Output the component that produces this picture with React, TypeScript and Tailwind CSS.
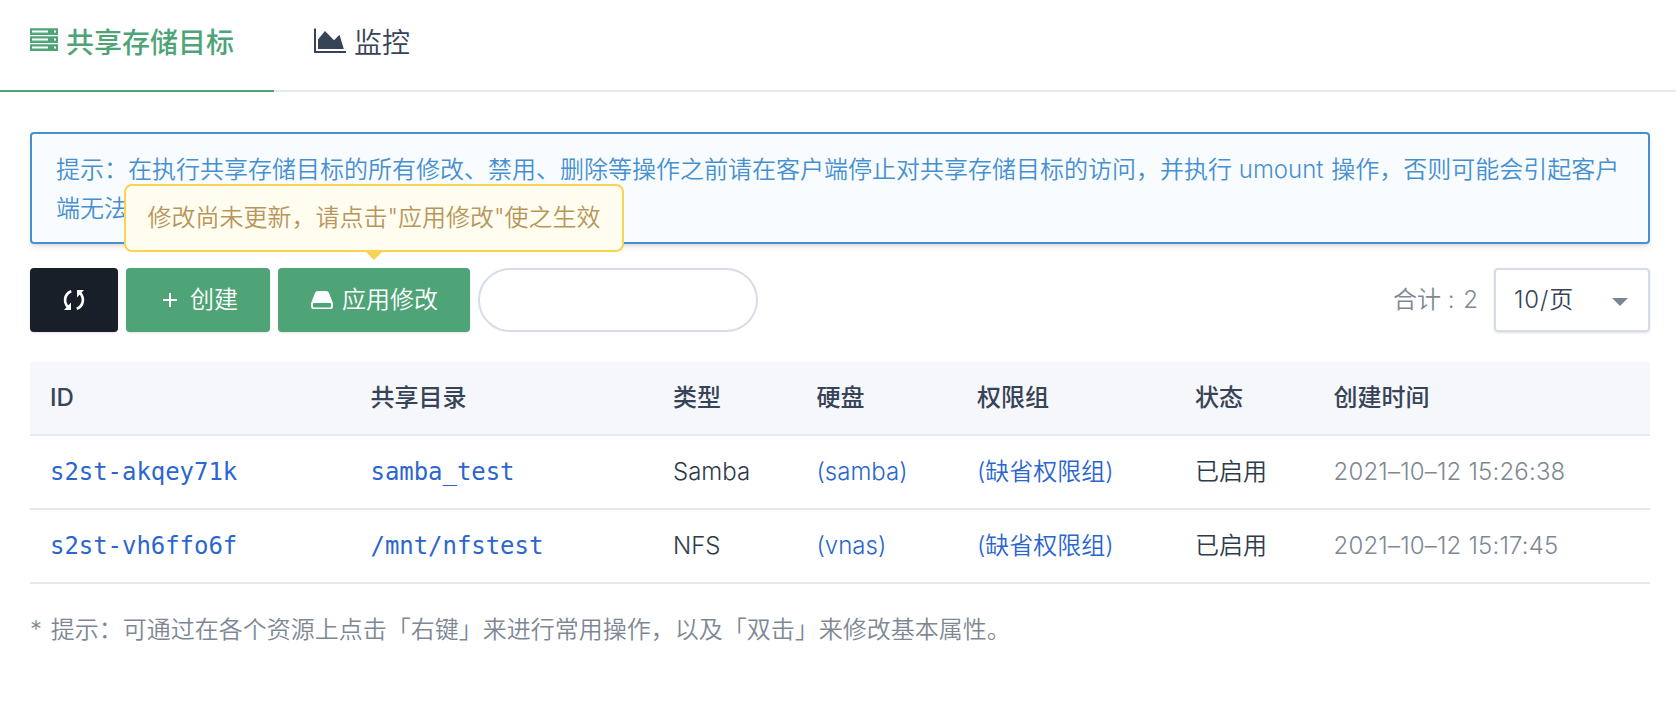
import React from "react";

const sans = "font-['Inter','Noto_Sans_CJK_SC',sans-serif]";

function ServerIcon() {
  return (
    <svg width="28" height="24" viewBox="0 0 28 24" fill="currentColor">
      {[0, 8, 16].map((y) => (
        <path
          key={y}
          fillRule="evenodd"
          d={`M0 ${y + 0.3}h28v6.600H0zM2 ${y + 2.6}v2h16v-2zM24 ${y + 2.6}v2h2v-2z`}
        />
      ))}
    </svg>
  );
}

function ChartIcon() {
  return (
    <svg width="33" height="26" viewBox="0 0 33 26" fill="currentColor">
      <path d="M0 0.500h2v22.500h30v2H0z" />
      <path d="M4 21V11.500l7-8.500 9 9.300 5.500-5.500 4.300 14.200z" />
    </svg>
  );
}

function SyncIcon() {
  return (
    <svg width="22" height="22" viewBox="0 0 22 22" fill="none" stroke="currentColor" strokeWidth="2.6">
      <path d="M8.300 2.200C1 5 0.500 13.500 5 18" />
      <path d="M13.700 19.800C21 17 21.500 8.500 17 4" />
      <path d="M8 13.500V21H1z" fill="currentColor" stroke="none" />
      <path d="M14 8.500V1h7z" fill="currentColor" stroke="none" />
    </svg>
  );
}

function DriveIcon() {
  return (
    <svg width="22" height="24" viewBox="0 0 22 24" fill="currentColor">
      <path
        fillRule="evenodd"
        d="M7 3h8q2.300 0 3 2l3.500 9q0.500 1.200 0.500 2.500v2q0 2.500-2.500 2.500h-17Q0 21 0 18.500v-2Q0 15.200 0.500 14L4 5q0.700-2 3-2zM3 15q-1 0-1 1v2.500q0 1 1 1h16q1 0 1-1V16q0-1-1-1z"
      />
    </svg>
  );
}

const rows = [
  ["s2st-akqey71k", "samba_test", "Samba", "(samba)", "(缺省权限组)", "已启用", "2021–10–12 15:26:38"],
  ["s2st-vh6ffo6f", "/mnt/nfstest", "NFS", "(vnas)", "(缺省权限组)", "已启用", "2021–10–12 15:17:45"],
];
const heads = ["ID", "共享目录", "类型", "硬盘", "权限组", "状态", "创建时间"];
const columns = "grid grid-cols-[320.5px_302.5px_143.5px_160.5px_218px_138.5px_1fr] items-center pl-5";
const cellStyles = [
  "font-['DejaVu_Sans_Mono',monospace] tracking-[-0.05px] text-[#2b66cf]",
  "font-['DejaVu_Sans_Mono',monospace] tracking-[-0.05px] text-[#2b66cf]",
  "text-[#2f3b4a]",
  "text-[#2b66cf]",
  "text-[#2b66cf]",
  "text-[#2f3b4a]",
  "tracking-[0.18px] text-[#7e8894]",
];

export default function App() {
  return (
    <div className={`${sans} h-[704px] w-[1676px] overflow-hidden bg-white text-2xl font-[350]`}>
      <nav className="flex h-[92px] text-[28px]">
        <div className="flex h-full w-[274px] items-start gap-2 border-b-2 border-[#4ea477] pl-[30px] pt-[22px] font-medium leading-[42px] text-[#4ea477]">
          <span className="mt-[6px]"><ServerIcon /></span>
          <span>共享存储目标</span>
        </div>
        <div className="flex h-full flex-1 items-start gap-[7px] border-b-2 border-[#e5e9f0] pl-10 pt-[22px] leading-[42px] text-[#374357]">
          <span className="mt-[6px]"><ChartIcon /></span>
          <span>监控</span>
        </div>
      </nav>

      <main className="pl-[30px] pr-[26px] pt-10">
        <div className="h-28 rounded border-2 border-[#4790d0] bg-[#f8fcff] px-6 py-4 leading-[39px] text-[#4790d0] shadow-md">
          提示：在执行共享存储目标的所有修改、禁用、删除等操作之前请在客户端停止对共享存储目标的访问，并执行 <span className="mr-px">umount</span> 操作，否则可能会引起客户端无法
        </div>

        <div className="mt-6 flex h-16 items-center gap-2">
          <button className="flex h-16 w-[88px] items-center justify-center rounded bg-[#181f29] text-white shadow">
            <SyncIcon />
          </button>
          <button className="flex h-16 w-36 items-center rounded bg-[#4ea477] pl-[37px] text-white shadow">
            <svg width="14" height="14" viewBox="0 0 14 14" stroke="currentColor" strokeWidth="2">
              <path d="M7 0v14M0 7h14" />
            </svg>
            <span className="ml-[13px]">创建</span>
          </button>
          <div className="relative">
            <button className="flex h-16 w-48 items-center rounded bg-[#4ea477] pl-[33px] text-white shadow">
              <DriveIcon />
              <span className="ml-[9px]">应用修改</span>
            </button>
            <div className="absolute bottom-20 left-[-154px] flex h-[68px] w-[500px] items-center justify-center whitespace-nowrap rounded-lg border-2 border-[#f9d352] bg-[#fffdf0] text-[#b8965a]">
              修改尚未更新，请点击"应用修改"使之生效
              <svg className="absolute left-[239px] top-[65px]" width="18" height="10" viewBox="0 0 18 10">
                <path d="M0 0h18L9 9z" fill="#f9d352" />
              </svg>
            </div>
          </div>
          <input aria-label="search" className="h-16 w-[280px] rounded-full border-2 border-[#d7dde7] bg-white px-6 outline-none" />
          <span className="ml-auto mr-2 text-[#7e8894]">合计 <span className="mr-[2px]">:</span> 2</span>
          <div className="flex h-16 w-[156px] items-center justify-between rounded border-2 border-[#d7dde7] pl-[18px] pr-5 text-[#374357] shadow-sm">
            <span className="tracking-[0.9px]">10/页</span>
            <svg className="mt-1" width="16" height="8" viewBox="0 0 16 8" fill="#7a8594">
              <path d="M0 0h16L8 8z" />
            </svg>
          </div>
        </div>

        <div className="mt-[30px]">
          <div className={`${columns} h-[74px] border-b-2 border-[#e5e9f0] bg-[#f5f7fb] font-medium text-[#374357]`}>
            {heads.map((head) => (
              <div key={head}>{head}</div>
            ))}
          </div>
          {rows.map((row) => (
            <div key={row[0]} className={`${columns} h-[74px] border-b-2 border-[#e5e9ee]`}>
              {row.map((cell, i) => (
                <div key={i} className={cellStyles[i]}>{cell}</div>
              ))}
            </div>
          ))}
        </div>

        <p className="mt-[26px] leading-[39px] text-[#7e8894]">
          <span className="mr-[2px]">*</span> 提示：可通过在各个资源上点击「右键」来进行常用操作，以及「双击」来修改基本属性。
        </p>
      </main>
    </div>
  );
}
